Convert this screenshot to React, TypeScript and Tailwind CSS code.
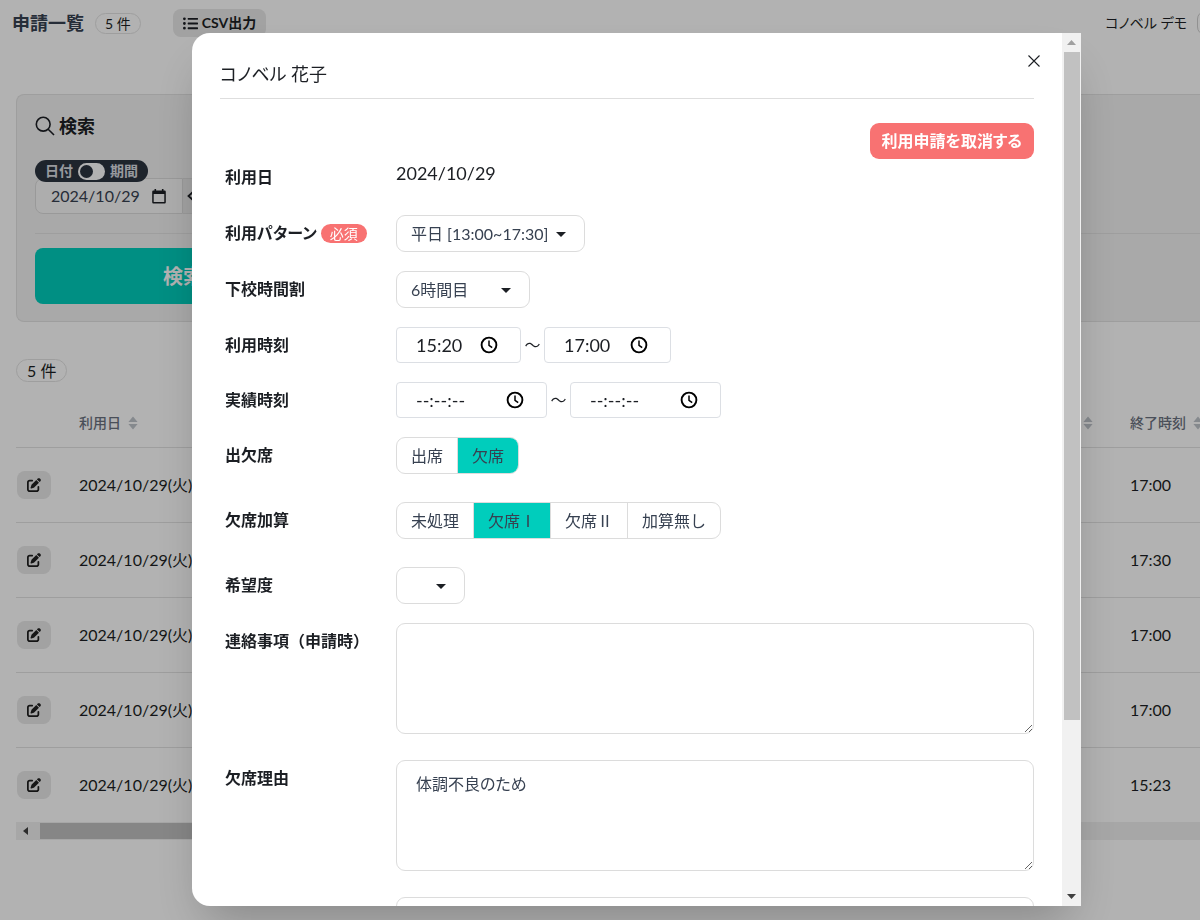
// App.tsx
import React, { useState } from 'react';
import { FaListUl } from 'react-icons/fa';
import { FaPenToSquare } from 'react-icons/fa6';

interface Application {
  id: number;
  date: string;
  start: string;
  end: string;
}

interface Option {
  value: string;
  label: string;
}

const applications: Application[] = [
  { id: 1, date: '2024/10/29(火)', start: '15:20', end: '17:00' },
  { id: 2, date: '2024/10/29(火)', start: '15:20', end: '17:30' },
  { id: 3, date: '2024/10/29(火)', start: '15:20', end: '17:00' },
  { id: 4, date: '2024/10/29(火)', start: '15:20', end: '17:00' },
  { id: 5, date: '2024/10/29(火)', start: '14:30', end: '15:23' },
];

const attendanceOptions: Option[] = [
  { value: 'present', label: '出席' },
  { value: 'absent', label: '欠席' },
];

const additionOptions: Option[] = [
  { value: 'pending', label: '未処理' },
  { value: 'absent1', label: '欠席Ⅰ' },
  { value: 'absent2', label: '欠席Ⅱ' },
  { value: 'none', label: '加算無し' },
];

/* ---------- Icons ---------- */

const SearchIcon = () => (
  <svg viewBox="0 0 20 20" className="h-5 w-5" fill="none" stroke="currentColor" strokeWidth="1.6" aria-hidden="true">
    <circle cx="8.2" cy="8.2" r="6.9" />
    <path d="M13.2 13.2 19 19" />
  </svg>
);

const SortIcon = () => (
  <svg viewBox="0 0 10 14" className="h-[14px] w-[10px] shrink-0 text-[#bfc4cb]" fill="currentColor" aria-hidden="true">
    <path d="M5 0.5 9.6 6H0.4zM5 13.5 0.4 8h9.2z" />
  </svg>
);

const CalendarIcon = () => (
  <svg viewBox="0 0 14 15" className="h-[15px] w-[14px]" aria-hidden="true">
    <path
      fill="currentColor"
      fillRule="evenodd"
      d="M2.5 0h1.6v1.5h5.8V0h1.6v1.5H12.6a1.2 1.2 0 0 1 1.2 1.2v10.6a1.2 1.2 0 0 1-1.2 1.2H1.4A1.2 1.2 0 0 1 .2 13.3V2.7A1.2 1.2 0 0 1 1.4 1.5h1.1zM1.7 5v8h10.6V5z"
    />
  </svg>
);

const ClockIcon = () => (
  <svg viewBox="0 0 18 18" className="h-[18px] w-[18px]" fill="none" stroke="currentColor" aria-hidden="true">
    <circle cx="9" cy="9" r="7.4" strokeWidth="1.9" />
    <path d="M9 4.6V9.3l3.2 2.4" strokeWidth="1.5" />
  </svg>
);

const CloseIcon = () => (
  <svg viewBox="0 0 12 12" className="h-3 w-3" fill="none" stroke="currentColor" strokeWidth="1.1" aria-hidden="true">
    <path d="M0.5 0.5l11 11M11.5 0.5l-11 11" />
  </svg>
);

/* ---------- Form parts ---------- */

interface FormRowProps {
  label?: string;
  htmlFor?: string;
  required?: boolean;
  className?: string;
  children: React.ReactNode;
}

const FormRow: React.FC<FormRowProps> = ({ label, htmlFor, required = false, className = 'pb-[19px]', children }) => (
  <div className={`grid grid-cols-[176px_1fr] ${className}`}>
    <div className="flex h-9 items-center gap-1 pl-[5px]">
      {label && (
        <label htmlFor={htmlFor} className="font-bold">
          {label}
        </label>
      )}
      {required && (
        <span className="rounded-full bg-[#f87272] px-[9px] text-sm leading-[19px] text-white">必須</span>
      )}
    </div>
    <div>{children}</div>
  </div>
);

interface SelectProps {
  id: string;
  options: string[];
  className: string;
}

const Select: React.FC<SelectProps> = ({ id, options, className }) => (
  <div className={`relative ${className}`}>
    <select
      id={id}
      className="block h-[37px] w-full appearance-none rounded-[9px] border border-[#dcdcdc] bg-white pl-[14px] pr-8 text-base text-[#374151]"
    >
      {options.map((option) => (
        <option key={option}>{option}</option>
      ))}
    </select>
    <svg
      viewBox="0 0 10 5"
      className="pointer-events-none absolute right-[19px] top-[17px] h-[5px] w-[10px]"
      fill="currentColor"
      aria-hidden="true"
    >
      <path d="M0 0h10L5 5z" />
    </svg>
  </div>
);

interface TimeFieldProps {
  id?: string;
  label: string;
  value: string;
  className: string;
}

const TimeField: React.FC<TimeFieldProps> = ({ id, label, value, className }) => (
  <div className={`flex h-9 items-center rounded-[4px] border border-[#dcdfe4] pl-[19px] pr-[22px] ${className}`}>
    <input id={id} aria-label={label} defaultValue={value} className="w-full min-w-0 text-lg leading-6 outline-none" />
    <button type="button" aria-label="時刻を選択" className="shrink-0 text-black">
      <ClockIcon />
    </button>
  </div>
);

interface SegmentProps {
  name: string;
  options: Option[];
  defaultValue: string;
}

const Segment: React.FC<SegmentProps> = ({ name, options, defaultValue }) => {
  const [selected, setSelected] = useState(defaultValue);

  return (
    <div
      className="flex h-[37px] w-fit overflow-hidden rounded-[9px] border border-[#dcdcdc] [font-feature-settings:normal]"
      role="radiogroup"
    >
      {options.map((option) => (
        <label
          key={option.value}
          className="flex cursor-pointer items-center border-l border-[#dcdcdc] px-[14px] text-[#374151] first:border-l-0 has-checked:bg-[#00cdbc]"
        >
          <input
            type="radio"
            name={name}
            value={option.value}
            checked={selected === option.value}
            onChange={() => setSelected(option.value)}
            className="sr-only"
          />
          {option.label}
        </label>
      ))}
    </div>
  );
};

const textareaClass =
  'block h-[111px] w-full rounded-[9px] border border-[#dcdcdc] px-[19px] py-[11px] text-base leading-6 text-[#374151] outline-none';

/* ---------- Page behind the dialog ---------- */

const PageHeader = () => (
  <header className="flex h-[46px] items-center whitespace-nowrap pl-3">
    <h1 className="text-lg font-bold leading-6 text-[#374151]">申請一覧</h1>
    <span className="ml-[11px] rounded-full border border-[#e3e3e3] px-[9px] text-sm leading-[19px]">5 件</span>
    <button
      type="button"
      className="ml-8 flex h-7 items-center gap-1 rounded-lg bg-[#e8e8e8] px-[10px] text-sm font-bold"
    >
      <FaListUl className="h-[15px] w-[15px]" />
      CSV出力
    </button>
    <span className="ml-auto text-sm">コノベル デモ</span>
    <button type="button" aria-label="メニュー" className="-mr-5 ml-[10px] h-6 w-[23px] shrink-0 rounded-lg border border-[#d0d0d0]" />
  </header>
);

const SearchPanel = () => (
  <section className="ml-4 mt-12 rounded-l-lg border-y border-l border-[#e3e3e3] bg-[#f2f2f2] pb-[17px] pl-[18px] pt-[17px]">
    <h2 className="flex items-center gap-1 text-lg font-bold leading-7">
      <SearchIcon />
      検索
    </h2>
    <div className="relative z-10 mt-5 flex h-[22px] w-fit items-center gap-[5px] rounded-full bg-[#2b3440] px-[10px] text-sm font-bold text-[#d9dce1]">
      <label htmlFor="period">日付</label>
      <input
        id="period"
        type="checkbox"
        className="h-[17px] w-[27px] appearance-none rounded-full bg-white p-[2px] before:block before:h-[13px] before:w-[13px] before:rounded-full before:bg-[#2b3440] checked:before:ml-[10px]"
      />
      <label htmlFor="period">期間</label>
    </div>
    <div className="-mt-1 flex h-9">
      <div className="flex w-[148px] items-center justify-between rounded-l-lg border border-[#dcdcdc] bg-[#f8f8f8] pl-[15px] pr-4">
        <input aria-label="利用日" defaultValue="2024/10/29" className="w-24 text-base leading-5 text-[#374151] outline-none" />
        <button type="button" aria-label="日付を選択">
          <CalendarIcon />
        </button>
      </div>
      <button type="button" className="w-8 border-y border-[#dcdcdc] bg-[#e8e8e8] pl-1" aria-label="前の日">
        <svg viewBox="0 0 8 12" className="h-3 w-2" fill="none" stroke="currentColor" strokeWidth="1.8">
          <path d="M7 1 1.5 6 7 11" />
        </svg>
      </button>
    </div>
    <div className="mt-[19px] border-t border-[#e3e3e3] pt-[14px]">
      <button type="button" className="h-14 w-[296px] rounded-lg bg-[#00cdbc] text-xl font-bold text-white">
        検索
      </button>
    </div>
  </section>
);

const ApplicationTable = () => (
  <section className="pl-4">
    <p className="mt-[37px] w-fit rounded-full border border-[#e3e3e3] px-[10px] text-base leading-[21px]">5 件</p>
    <table className="mt-[18px] w-full table-fixed text-left">
      <thead>
        <tr className="h-[47px] border-b border-[#e3e3e3] text-sm text-[#6b7280]">
          <th className="w-[63px]" aria-label="編集" />
          <th className="font-medium">
            <span className="flex items-center gap-[7px]">
              利用日
              <SortIcon />
            </span>
          </th>
          <th className="w-[105px] font-medium">
            <span className="flex items-center gap-[2px] whitespace-nowrap">
              開始時刻
              <SortIcon />
            </span>
          </th>
          <th className="w-[70px] font-medium">
            <span className="flex items-center gap-[7px] whitespace-nowrap">
              終了時刻
              <SortIcon />
            </span>
          </th>
        </tr>
      </thead>
      <tbody>
        {applications.map((item) => (
          <tr key={item.id} className="h-[75px] border-b border-[#e3e3e3] last:border-b-0">
            <td className="pl-px">
              <button
                type="button"
                aria-label="編集"
                className="flex h-7 w-[34px] items-center justify-center rounded-lg bg-[#e8e8e8] text-[#1f1f1f]"
              >
                <FaPenToSquare className="h-[14px] w-[14px]" />
              </button>
            </td>
            <td>{item.date}</td>
            <td>{item.start}</td>
            <td>{item.end}</td>
          </tr>
        ))}
      </tbody>
    </table>
    {/* Horizontal scroll track */}
    <div className="flex h-[18px] items-center bg-[#f0f0f0]">
      <svg viewBox="0 0 5 8" className="ml-[7px] mr-3 h-2 w-[5px] text-[#404040]" fill="currentColor" aria-hidden="true">
        <path d="M5 0v8L0 4z" />
      </svg>
      <div className="h-4 w-3/5 bg-[#c1c1c1]" />
    </div>
  </section>
);

/* ---------- Dialog ---------- */

const ScrollTrack = () => (
  <div className="flex w-[19px] shrink-0 flex-col items-center bg-[#f1f1f1]" aria-hidden="true">
    <div className="flex h-[19px] items-center">
      <svg viewBox="0 0 9 5" className="h-[5px] w-[9px] text-[#a0a0a0]" fill="currentColor">
        <path d="M0 5 4.5 0 9 5z" />
      </svg>
    </div>
    <div className="min-h-0 flex-1">
      <div className="h-4/5 w-4 bg-[#c1c1c1]" />
    </div>
    <div className="flex h-[19px] items-center">
      <svg viewBox="0 0 9 5" className="h-[5px] w-[9px] text-[#404040]" fill="currentColor">
        <path d="M0 0h9L4.5 5z" />
      </svg>
    </div>
  </div>
);

const ApplicationDialog = () => (
  <div className="fixed inset-0 z-20 flex bg-black/30 pb-[14px] pl-48 pr-[119px] pt-[33px]">
    <div
      role="dialog"
      aria-label="コノベル 花子"
      className="flex min-w-0 flex-1 overflow-hidden rounded-l-[18px] bg-white shadow-2xl"
    >
      <form className="min-w-0 flex-1 overflow-hidden px-7" onSubmit={(e) => e.preventDefault()}>
        <div className="flex h-[66px] items-start justify-between border-b border-[#dedede]">
          <h2 className="pt-7 text-lg leading-[26px]">コノベル 花子</h2>
          <button type="button" aria-label="閉じる" className="-mr-[6px] mt-[22px]">
            <CloseIcon />
          </button>
        </div>

        <div className="mt-6 flex justify-end">
          <button type="button" className="h-9 rounded-[9px] bg-[#f87272] px-3 font-bold text-white">
            利用申請を取消する
          </button>
        </div>

        <FormRow label="利用日" className="pb-5">
          <span className="block text-lg leading-7">2024/10/29</span>
        </FormRow>
        <FormRow label="利用パターン" htmlFor="pattern" required>
          <Select id="pattern" options={['平日 [13:00~17:30]', '休日 [10:00~17:00]']} className="w-[189px]" />
        </FormRow>
        <FormRow label="下校時間割" htmlFor="lesson">
          <Select id="lesson" options={['6時間目', '5時間目', '4時間目']} className="w-[134px]" />
        </FormRow>
        <FormRow label="利用時刻" htmlFor="start">
          <div className="flex items-center">
            <TimeField id="start" label="利用開始時刻" value="15:20" className="w-[125px]" />
            <span className="w-[23px] text-center">～</span>
            <TimeField label="利用終了時刻" value="17:00" className="w-[127px]" />
          </div>
        </FormRow>
        <FormRow label="実績時刻" htmlFor="actual">
          <div className="flex items-center">
            <TimeField id="actual" label="実績開始時刻" value="--:--:--" className="w-[151px]" />
            <span className="w-[23px] text-center">～</span>
            <TimeField label="実績終了時刻" value="--:--:--" className="w-[151px]" />
          </div>
        </FormRow>
        <FormRow label="出欠席" className="pb-7">
          <Segment name="attendance" options={attendanceOptions} defaultValue="absent" />
        </FormRow>
        <FormRow label="欠席加算" className="pb-7">
          <Segment name="addition" options={additionOptions} defaultValue="absent1" />
        </FormRow>
        <FormRow label="希望度" htmlFor="wish">
          <Select id="wish" options={['', '1', '2', '3']} className="w-[69px]" />
        </FormRow>
        <FormRow label="連絡事項（申請時）" htmlFor="note" className="pb-[26px] [font-feature-settings:normal]">
          <textarea id="note" className={textareaClass} />
        </FormRow>
        <FormRow label="欠席理由" htmlFor="reason" className="pb-[26px]">
          <textarea id="reason" className={textareaClass} defaultValue="体調不良のため" />
        </FormRow>
        <FormRow className="pb-[26px]">
          <textarea aria-label="備考" className={textareaClass} />
        </FormRow>
      </form>
      <ScrollTrack />
    </div>
  </div>
);

const App: React.FC = () => {
  return (
    <div className="min-h-screen overflow-hidden bg-white font-['Lato','Noto_Sans_CJK_JP',sans-serif] text-base text-[#1c1f24] [font-feature-settings:'palt']">
      <PageHeader />
      <SearchPanel />
      <ApplicationTable />
      <ApplicationDialog />
    </div>
  );
};

export default App;
